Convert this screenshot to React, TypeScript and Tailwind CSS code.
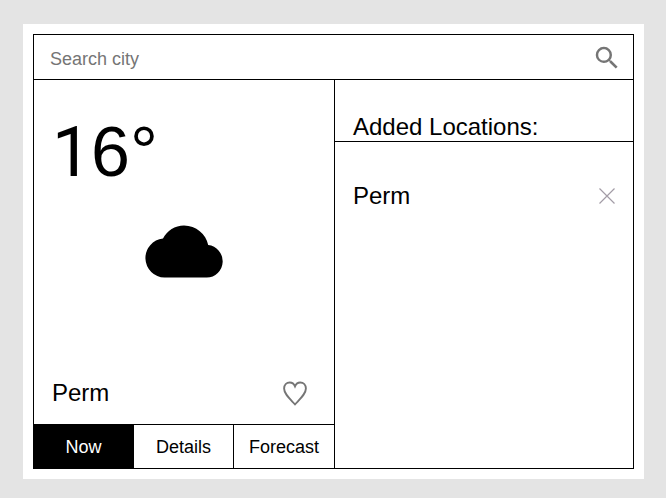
import React, { useState } from "react";

const tabs = ["Now", "Details", "Forecast"];

function SearchIcon() {
  return (
    <svg className="size-[30px]" viewBox="0 0 24 24" fill="#757575">
      <path d="M15.5 14h-.79l-.28-.27A6.471 6.471 0 0 0 16 9.5 6.5 6.5 0 1 0 9.5 16c1.61 0 3.09-.59 4.23-1.57l.27.28v.79l5 4.99L20.49 19l-4.99-5zm-6 0C7.01 14 5 11.99 5 9.5S7.01 5 9.5 5 14 7.01 14 9.5 11.99 14 9.5 14z" />
    </svg>
  );
}

function HeartIcon() {
  return (
    <svg className="h-[25px] w-[24px]" viewBox="0 0 24 25" fill="none" stroke="#757575" strokeWidth="1.9">
      <path d="M12 5.4C10.8 2.6 8.8 1.5 6.8 1.5C3.5 1.5 1.1 4.1 1.1 7.6C1.1 13 6.6 17.6 12 23.4C17.4 17.6 22.9 13 22.9 7.6C22.9 4.1 20.5 1.5 17.2 1.5C15.2 1.5 13.2 2.6 12 5.4Z" />
    </svg>
  );
}

function CloudIcon() {
  return (
    <svg className="h-[53px] w-[78px]" viewBox="0 0 78 53">
      <path d="M19.5 52.5A19.5 19.5 0 0 1 18 13.6C22 5.5 30 .5 39 .5C51 .5 61 9 63.2 20.1A16.25 16.25 0 0 1 61.75 52.5Z" />
    </svg>
  );
}

export default function App() {
  const [active, setActive] = useState("Now");
  return (
    <main className="h-[498px] w-[666px] bg-[#e4e4e4] pt-6 pl-[23px] font-['Liberation_Sans',Arial,sans-serif] text-black">
      <div className="h-[455px] w-[621px] bg-white p-[10px]">
        <div className="flex h-[435px] w-[601px] flex-col border border-black">
          <form className="flex h-[45px] shrink-0 items-center justify-between border-b border-black pr-[11px] pl-4" onSubmit={(e) => e.preventDefault()}>
            <input className="h-8 w-96 pt-1 text-[18px] outline-none placeholder:text-[#757575]" placeholder="Search city" />
            <button aria-label="Search" className="pt-0.5">
              <SearchIcon />
            </button>
          </form>
          <div className="flex min-h-0 grow">
            <section className="flex w-[301px] shrink-0 flex-col border-r border-black">
              <div className="flex grow flex-col px-[18px] pt-[32px]">
                <div className="h-20 text-[70px] leading-[80px]">
                  <span className="inline-block w-[39px] font-[Roboto] leading-none">1</span>
                  6°
                </div>
                <div className="mt-[33px] pl-[93px]">
                  <CloudIcon />
                </div>
                <div className="mt-auto mb-[17px] flex items-center justify-between pr-[9px]">
                  <span className="text-2xl leading-7">Perm</span>
                  <button aria-label="Add to locations">
                    <HeartIcon />
                  </button>
                </div>
              </div>
              <nav className="grid h-11 shrink-0 grid-cols-3 border-t border-black">
                {tabs.map((tab) => (
                  <button
                    key={tab}
                    onClick={() => setActive(tab)}
                    className={`border-r border-black pt-0.5 text-[18px] last:border-r-0 ${active === tab ? "bg-black text-white" : ""}`}
                  >
                    {tab}
                  </button>
                ))}
              </nav>
            </section>
            <section className="grow">
              <h2 className="h-[62px] border-b border-black pt-[33px] pl-[18px] text-2xl leading-7">Added Locations:</h2>
              <div className="flex items-center justify-between pt-10 pr-[18px] pl-[18px]">
                <span className="text-2xl leading-7">Perm</span>
                <button aria-label="Remove Perm">
                  <svg className="size-4" viewBox="0 0 16 16" stroke="#a39ca6" strokeWidth="1.2">
                    <path d="M.5.5l15 15M15.5.5l-15 15" />
                  </svg>
                </button>
              </div>
            </section>
          </div>
        </div>
      </div>
    </main>
  );
}
